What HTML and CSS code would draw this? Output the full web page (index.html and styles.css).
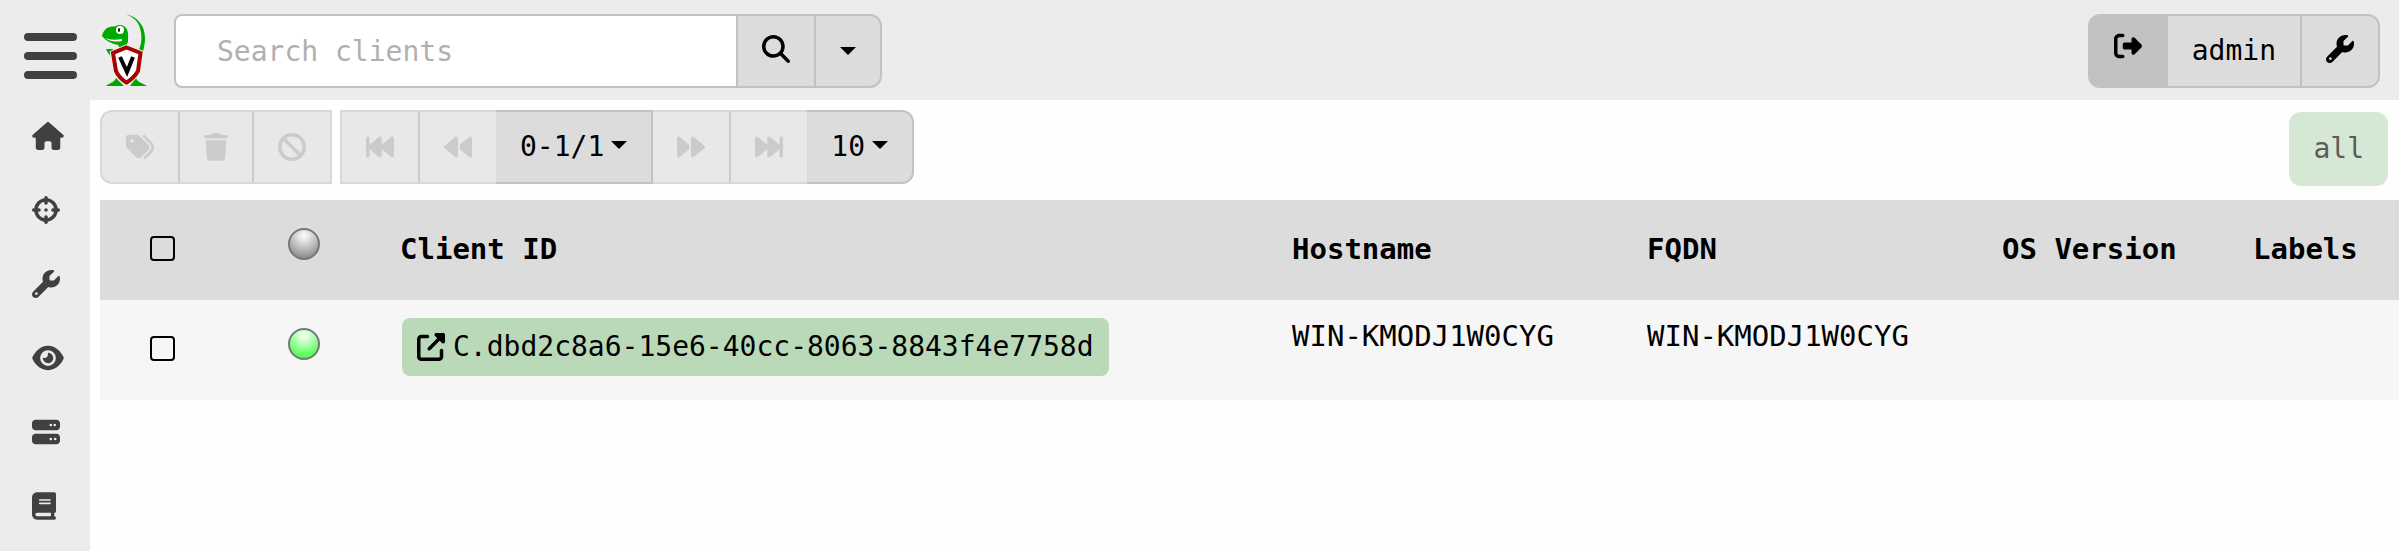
FILE: index.html
```html
<!DOCTYPE html>
<html lang="en">
<head>
<meta charset="utf-8">
<title>Clients</title>
<link rel="stylesheet" href="styles.css">
</head>
<body>
<svg class="sprite" aria-hidden="true">
<symbol id="house" viewBox="0 0 576 512"><path d="M575.8 255.5c0 18-15 32.1-32 32.1h-32l.7 160.2c0 2.7-.2 5.4-.5 8.1V472c0 22.1-17.9 40-40 40H456c-1.1 0-2.2 0-3.3-.1c-1.4 .1-2.8 .1-4.2 .1H416 392c-22.1 0-40-17.9-40-40V448 384c0-17.7-14.3-32-32-32H256c-17.7 0-32 14.3-32 32v64 24c0 22.1-17.9 40-40 40H160 128.1c-1.5 0-3-.1-4.5-.2c-1.2 .1-2.4 .2-3.6 .2H104c-22.1 0-40-17.9-40-40V360c0-.9 0-1.9 .1-2.8V287.6H32c-18 0-32-14-32-32.1c0-9 3-17 10-24L266.4 8c7-7 15-8 22-8s15 2 21 7L564.8 231.5c8 7 12 15 11 24z"/></symbol>
<symbol id="crosshairs" viewBox="0 0 512 512"><path d="M256 0c17.700 0 32 14.300 32 32V42.400c93.700 13.900 167.700 88 181.600 181.600H480c17.700 0 32 14.300 32 32s-14.300 32-32 32H469.600c-13.900 93.700-88 167.700-181.600 181.600V480c0 17.700-14.300 32-32 32s-32-14.300-32-32V469.600C130.300 455.700 56.300 381.700 42.400 288H32c-17.700 0-32-14.300-32-32s14.300-32 32-32H42.400C56.300 130.300 130.300 56.300 224 42.400V32c0-17.700 14.300-32 32-32zM107.400 288c12.500 58.300 58.400 104.100 116.600 116.600V384c0-17.700 14.300-32 32-32s32 14.300 32 32v20.600c58.300-12.500 104.100-58.400 116.600-116.600H384c-17.700 0-32-14.300-32-32s14.300-32 32-32h20.600C392.100 165.700 346.300 119.900 288 107.400V128c0 17.700-14.300 32-32 32s-32-14.300-32-32V107.400C165.700 119.900 119.900 165.700 107.400 224H128c17.700 0 32 14.300 32 32s-14.300 32-32 32H107.400zM256 224a32 32 0 1 1 0 64 32 32 0 1 1 0-64z"/></symbol>
<symbol id="wrench" viewBox="0 0 512 512"><path d="M352 320c88.400 0 160-71.600 160-160c0-15.300-2.200-30.100-6.200-44.200c-3.100-10.800-16.400-13.200-24.300-5.300l-76.800 76.800c-3 3-7.100 4.700-11.300 4.700H336c-8.800 0-16-7.200-16-16V118.600c0-4.200 1.700-8.300 4.700-11.300l76.800-76.800c7.900-7.900 5.400-21.200-5.300-24.300C382.100 2.200 367.300 0 352 0C263.600 0 192 71.600 192 160c0 19.100 3.400 37.500 9.500 54.500L19.900 396.100C7.200 408.800 0 426.100 0 444.100C0 481.600 30.400 512 67.900 512c18 0 35.300-7.200 48-19.900L297.500 310.500c17 6.200 35.400 9.500 54.500 9.500zM80 408a24 24 0 1 1 0 48 24 24 0 1 1 0-48z"/></symbol>
<symbol id="eye" viewBox="0 0 576 512"><path d="M288 32c-80.800 0-145.500 36.800-192.600 80.600C48.600 156 17.300 208 2.500 243.700c-3.300 7.900-3.300 16.700 0 24.600C17.300 304 48.600 356 95.400 399.400C142.500 443.200 207.200 480 288 480s145.500-36.800 192.600-80.600c46.800-43.500 78.100-95.400 93-131.100c3.300-7.900 3.300-16.700 0-24.600c-14.900-35.700-46.200-87.700-93-131.100C433.500 68.800 368.800 32 288 32zM144 256a144 144 0 1 1 288 0 144 144 0 1 1 -288 0zm144-64c0 35.300-28.700 64-64 64c-7.100 0-13.900-1.200-20.300-3.300c-5.500-1.800-11.900 1.600-11.700 7.400c.3 6.900 1.300 13.800 3.200 20.700c13.700 51.200 66.400 81.600 117.600 67.900s81.600-66.400 67.900-117.600c-11.100-41.500-47.800-69.400-88.600-71.100c-5.800-.2-9.200 6.100-7.400 11.700c2.100 6.400 3.300 13.200 3.300 20.300z"/></symbol>
<symbol id="server" viewBox="0 0 512 512"><path d="M64 32C28.700 32 0 60.700 0 96v64c0 35.300 28.700 64 64 64H448c35.300 0 64-28.700 64-64V96c0-35.300-28.700-64-64-64H64zm280 72a24 24 0 1 1 0 48 24 24 0 1 1 0-48zm48 24a24 24 0 1 1 48 0 24 24 0 1 1 -48 0zM64 288c-35.300 0-64 28.700-64 64v64c0 35.300 28.700 64 64 64H448c35.300 0 64-28.700 64-64V352c0-35.300-28.700-64-64-64H64zm280 72a24 24 0 1 1 0 48 24 24 0 1 1 0-48zm56 24a24 24 0 1 1 48 0 24 24 0 1 1 -48 0z"/></symbol>
<symbol id="book" viewBox="0 0 448 512"><path d="M96 0C43 0 0 43 0 96V416c0 53 43 96 96 96H384h32c17.700 0 32-14.300 32-32s-14.300-32-32-32V384c17.700 0 32-14.300 32-32V32c0-17.700-14.300-32-32-32H384 96zm0 384H352v64H96c-17.700 0-32-14.300-32-32s14.300-32 32-32zm32-240c0-8.800 7.200-16 16-16H336c8.800 0 16 7.200 16 16s-7.200 16-16 16H144c-8.800 0-16-7.200-16-16zm16 48H336c8.800 0 16 7.200 16 16s-7.200 16-16 16H144c-8.800 0-16-7.200-16-16s7.200-16 16-16z"/></symbol>
<symbol id="tags" viewBox="0 0 512 512"><path d="M345 39.100L472.800 168.400c52.400 53 52.400 138.200 0 191.200L360.800 472.900c-9.300 9.400-24.500 9.500-33.900 .2s-9.500-24.500-.2-33.900L438.600 325.900c33.900-34.300 33.900-89.400 0-123.700L310.900 72.900c-9.300-9.400-9.200-24.600 .2-33.900s24.600-9.200 33.900 .2zM0 229.500V80C0 53.500 21.500 32 48 32H197.500c17 0 33.300 6.700 45.300 18.700l168 168c25 25 25 65.500 0 90.500L277.300 442.700c-25 25-65.500 25-90.500 0l-168-168C6.700 262.700 0 246.500 0 229.500zM144 144a32 32 0 1 0 -64 0 32 32 0 1 0 64 0z"/></symbol>
<symbol id="trash" viewBox="0 0 448 512"><path d="M135.200 17.700L128 32H32C14.300 32 0 46.300 0 64S14.300 96 32 96H416c17.700 0 32-14.300 32-32s-14.300-32-32-32H320l-7.200-14.300C307.400 6.800 296.300 0 284.200 0H163.800c-12.100 0-23.200 6.800-28.600 17.700zM416 128H32L53.200 467c1.600 25.300 22.600 45 47.900 45H346.900c25.300 0 46.300-19.700 47.900-45L416 128z"/></symbol>
<symbol id="ban" viewBox="0 0 512 512"><path d="M367.200 412.500L99.500 144.800C77.100 176.100 64 214.500 64 256c0 106 86 192 192 192c41.500 0 79.900-13.100 111.200-35.500zm45.300-45.300C434.900 335.900 448 297.500 448 256c0-106-86-192-192-192c-41.500 0-79.900 13.100-111.200 35.500L412.500 367.200zM0 256a256 256 0 1 1 512 0A256 256 0 1 1 0 256z"/></symbol>
<symbol id="first" viewBox="0 0 512 512"><path d="M493.600 445c-11.200 5.300-24.500 3.600-34.100-4.400L288 297.700V416c0 12.400-7.200 23.700-18.400 29s-24.500 3.600-34.100-4.400L64 297.700V416c0 17.700-14.300 32-32 32s-32-14.300-32-32V96C0 78.300 14.300 64 32 64s32 14.300 32 32V214.300L235.500 71.400c9.500-7.900 22.800-9.700 34.100-4.400S288 83.600 288 96V214.300L459.500 71.400c9.500-7.900 22.800-9.700 34.100-4.400S512 83.600 512 96V416c0 12.400-7.200 23.700-18.400 29z"/></symbol>
<symbol id="previous" viewBox="0 0 512 512"><path d="M459.500 440.600c9.500 7.900 22.800 9.700 34.100 4.400s18.400-16.600 18.400-29V96c0-12.400-7.200-23.700-18.400-29s-24.500-3.600-34.100 4.400L288 214.300V256v41.700L459.500 440.600zM256 352V256 128 96c0-12.400-7.200-23.700-18.400-29s-24.500-3.600-34.100 4.400l-192 160C4.200 237.500 0 246.500 0 256s4.200 18.500 11.500 24.600l192 160c9.500 7.900 22.800 9.700 34.100 4.400s18.400-16.600 18.400-29V352z"/></symbol>
<symbol id="search" viewBox="0 0 512 512"><path d="M416 208c0 45.900-14.900 88.300-40 122.700L502.600 457.400c12.500 12.500 12.500 32.800 0 45.300s-32.800 12.500-45.300 0L330.700 376c-34.400 25.200-76.800 40-122.700 40C93.100 416 0 322.900 0 208S93.100 0 208 0S416 93.100 416 208zM208 352a144 144 0 1 0 0-288 144 144 0 1 0 0 288z"/></symbol>
<symbol id="logout" viewBox="0 0 512 512"><path d="M377.900 105.900L500.700 228.700c7.200 7.200 11.300 17.100 11.300 27.300s-4.100 20.100-11.300 27.300L377.900 406.100c-6.400 6.400-15 9.900-24 9.900c-18.700 0-33.900-15.200-33.900-33.900l0-62.100-128 0c-17.700 0-32-14.300-32-32l0-64c0-17.700 14.300-32 32-32l128 0 0-62.100c0-18.700 15.200-33.900 33.900-33.900c9 0 17.600 3.600 24 9.900zM160 96L96 96c-17.700 0-32 14.300-32 32l0 256c0 17.700 14.300 32 32 32l64 0c17.700 0 32 14.300 32 32s-14.300 32-32 32l-64 0c-53 0-96-43-96-96L0 128C0 75 43 32 96 32l64 0c17.700 0 32 14.300 32 32s-14.300 32-32 32z"/></symbol>
<symbol id="external" viewBox="0 0 512 512"><path d="M352 0c-12.900 0-24.600 7.800-29.600 19.800s-2.200 25.700 6.900 34.900L370.700 96 201.400 265.400c-12.500 12.500-12.500 32.800 0 45.300s32.800 12.500 45.300 0L416 141.300l41.400 41.400c9.200 9.200 22.900 11.900 34.900 6.900s19.800-16.600 19.800-29.600V32c0-17.700-14.300-32-32-32H352zM80 32C35.800 32 0 67.800 0 112V432c0 44.200 35.800 80 80 80H400c44.200 0 80-35.800 80-80V320c0-17.700-14.300-32-32-32s-32 14.300-32 32V432c0 8.800-7.200 16-16 16H80c-8.800 0-16-7.200-16-16V112c0-8.800 7.200-16 16-16H192c17.700 0 32-14.300 32-32s-14.300-32-32-32H80z"/></symbol>
<symbol id="bars" viewBox="0 0 53 46"><rect width="53" height="8" rx="4"/><rect y="19" width="53" height="8" rx="4"/><rect y="38" width="53" height="8" rx="4"/></symbol>
</svg>

<header class="topbar">
  <button class="menu" type="button" aria-label="Menu"><svg class="bars"><use href="#bars"/></svg></button>
  <a class="brand" href="#" aria-label="Home">
    <svg class="logo" viewBox="0 0 46 72">
      <g fill="#00a900">
        <path d="M24 0C36 3 43 12 43 24C43 30 42 33 41 38L37 36C40 29 40 21 38 14C36 7 31 3 24 0Z"/>
        <path d="M0 22C1 18 3 14 8 13C11 12 12 13 14 12C17 10 22 11 24 14C27 18 26 23 26 28C25 31 21 32 17 31C10 30 4 27 0 22Z"/>
        <path d="M16 30L25 28L25 34L18 36ZM4 35L11 35L11 37L8 37L9 42L6 39Z"/>
        <path d="M4 72C7 69 12 69 14 64L22 72ZM28 72L34 64C36 69 41 69 45 72Z"/>
      </g>
      <path d="M3 24Q10 27 20 25L20 27Q10 29 3 24Z" fill="#fff"/>
      <circle cx="18" cy="16" r="4" fill="#fff"/><ellipse cx="17" cy="16" rx="1" ry="2"/>
      <path d="M24.500 33.500L38.500 39L36 57Q32 64 24.500 68.500Q17 64 14 57L11 39Z" fill="#fff" stroke="#ececec" stroke-width="6"/>
      <path d="M24.500 33.500L38.500 39L36 57Q32 64 24.500 68.500Q17 64 14 57L11 39Z" fill="#fff" stroke="#a90000" stroke-width="4"/>
      <path d="M18 43L25 58L31 43" fill="none" stroke="#000" stroke-width="4"/>
    </svg>
  </a>
  <form class="search group">
    <input type="text" aria-label="Search clients" placeholder="Search clients">
    <button class="btn" type="button" aria-label="Search"><svg class="icon"><use href="#search"/></svg></button>
    <button class="btn small" type="button" aria-label="Search options"><span class="caret"></span></button>
  </form>
  <div class="account group">
    <a class="btn logout" href="#" aria-label="Log out"><svg class="icon"><use href="#logout"/></svg></a>
    <button class="btn user" type="button">admin</button>
    <button class="btn" type="button" aria-label="Settings"><svg class="icon"><use href="#wrench"/></svg></button>
  </div>
</header>

<div class="body">
  <nav class="sidebar" aria-label="Main">
    <a href="#" aria-label="Home"><svg class="icon wide"><use href="#house"/></svg></a>
    <a href="#" aria-label="Hunts"><svg class="icon"><use href="#crosshairs"/></svg></a>
    <a href="#" aria-label="Artifacts"><svg class="icon"><use href="#wrench"/></svg></a>
    <a href="#" aria-label="Events"><svg class="icon wide"><use href="#eye"/></svg></a>
    <a href="#" aria-label="Server"><svg class="icon"><use href="#server"/></svg></a>
    <a href="#" aria-label="Notebooks"><svg class="icon narrow"><use href="#book"/></svg></a>
  </nav>
  <main class="content">
    <div class="toolbar">
      <div class="group">
        <button class="btn" type="button" disabled aria-label="Label clients"><svg class="icon"><use href="#tags"/></svg></button>
        <button class="btn" type="button" disabled aria-label="Delete clients"><svg class="icon narrow"><use href="#trash"/></svg></button>
        <button class="btn" type="button" disabled aria-label="Cancel"><svg class="icon"><use href="#ban"/></svg></button>
      </div>
      <div class="group pager">
        <button class="btn" type="button" disabled aria-label="First page"><svg class="icon"><use href="#first"/></svg></button>
        <button class="btn" type="button" disabled aria-label="Previous page"><svg class="icon"><use href="#previous"/></svg></button>
        <button class="btn count" type="button">0-1/1<span class="caret"></span></button>
        <button class="btn" type="button" disabled aria-label="Next page"><svg class="icon flip"><use href="#previous"/></svg></button>
        <button class="btn" type="button" disabled aria-label="Last page"><svg class="icon flip"><use href="#first"/></svg></button>
        <button class="btn count" type="button">10<span class="caret"></span></button>
      </div>
      <button class="filter" type="button" disabled>all</button>
    </div>
    <table class="clients">
      <colgroup><col class="col-check"><col class="col-state"><col><col class="col-host"><col class="col-host"><col class="col-os"><col class="col-labels"></colgroup>
      <thead>
        <tr>
          <th class="check"><input type="checkbox" aria-label="Select all"></th>
          <th class="state"><span class="orb"></span></th>
          <th>Client ID</th><th>Hostname</th><th>FQDN</th><th>OS Version</th><th>Labels</th>
        </tr>
      </thead>
      <tbody>
        <tr>
          <td class="check"><input type="checkbox" aria-label="Select client"></td>
          <td class="state"><span class="orb online"></span></td>
          <td><a class="client" href="#"><svg class="icon"><use href="#external"/></svg>C.dbd2c8a6-15e6-40cc-8063-8843f4e7758d</a></td>
          <td>WIN-KMODJ1W0CYG</td><td>WIN-KMODJ1W0CYG</td><td></td><td></td>
        </tr>
      </tbody>
    </table>
  </main>
</div>
</body>
</html>
```
FILE: styles.css
```css
* { box-sizing: border-box; }
body {
  margin: 0;
  min-height: 100vh;
  display: flex;
  flex-direction: column;
  background: #fefefe;
  color: #000;
  font: 28px/42px "DejaVu Sans Mono", monospace;
}
button, input { font: inherit; color: inherit; }
a { color: inherit; text-decoration: none; }
.sprite { display: none; }
.icon { width: 28px; height: 28px; fill: currentColor; flex: none; }
.wide { width: 32px; }
.narrow { width: 24px; }
.flip { transform: scaleX(-1); }

.topbar {
  display: flex;
  align-items: flex-start;
  height: 100px;
  padding: 14px 19px 0 24px;
  background: #ececec;
}
.menu { padding: 19px 0 0; border: 0; background: none; color: #404040; display: flex; }
.bars { width: 53px; height: 46px; fill: currentColor; }
.brand { margin: 0 26px 0 25px; display: flex; }
.logo { width: 46px; height: 72px; }

.group { display: flex; }
.btn {
  display: flex;
  align-items: center;
  justify-content: center;
  height: 74px;
  min-width: 80px;
  padding: 0 24px;
  border: 2px solid #c2c2c2;
  background: #dcdcdc;
}
.btn + .btn, input + .btn { margin-left: -2px; }
.group .btn:last-child { border-radius: 0 12px 12px 0; }
.group .btn:first-child { border-radius: 12px 0 0 12px; }
.btn:disabled { background: #e8e8e8; border-color: #d8d8d8; border-left-color: #cbcbcb; color: #cbcbcb; }
.btn:disabled:first-child { border-left-color: #d8d8d8; }
.caret { border: 8px solid transparent; border-top-color: #000; border-bottom: 0; }
.btn.small { min-width: 68px; padding: 0; }

.search input {
  width: 564px;
  height: 74px;
  padding: 0 41px;
  border: 2px solid #c2c2c2;
  border-radius: 8px 0 0 8px;
  background: #fff;
}
.search input::placeholder { color: #b0b0b0; opacity: 1; }
.search .icon, .account .icon { margin-bottom: 4px; }
.account { margin-left: auto; }
.logout { background: #c2c2c2; }
.logout .icon { margin-bottom: 10px; }

.body { display: flex; flex: 1; }
.sidebar { width: 90px; flex: none; background: #ececec; color: #404040; }
.sidebar a { display: flex; align-items: center; height: 74px; padding: 0 0 2px 32px; }

.content { flex: 1; min-width: 0; padding: 10px 0 0 10px; }
.toolbar { display: flex; gap: 8px; height: 90px; padding-right: 11px; }
.toolbar .group .btn:nth-child(2) { min-width: 76px; }
.toolbar .group:first-child .btn:last-child { border-radius: 0; }
.toolbar .pager .btn { border-right-width: 0; }
.toolbar .pager .count { border-left: 0; margin-left: 0; border-right-width: 2px; }
.toolbar .pager .count + .btn { border-left: 0; margin-left: 0; min-width: 76px; }
.toolbar .pager .btn:not(.count) + .btn:not(.count) { margin-left: 0; min-width: 78px; }
.pager .btn:not(.count) { min-width: 78px; }
.pager .btn:first-child { border-radius: 0; }
.pager .caret { margin: 0 0 4px 7px; }
.filter {
  margin: 2px 0 0 auto;
  height: 74px;
  padding: 0 24px;
  border: 0;
  border-radius: 12px;
  background: #d5e8d4;
  color: #5c5c5c;
}

.clients { width: 100%; table-layout: fixed; border-collapse: collapse; font-size: 29px; }
.clients tr { height: 100px; }
.clients th { padding: 0 15px 2px; text-align: left; white-space: nowrap; background: #dcdcdc; vertical-align: middle; }
.clients td { padding: 15px 15px 0; vertical-align: top; background: #f6f6f6; white-space: nowrap; }
.col-check { width: 138px; }
.col-state { width: 147px; }
.col-host { width: 355px; }
.col-os { width: 251px; }
.col-labels { width: 161px; }
.clients .check { padding: 0 0 4px 50px; vertical-align: middle; }
.check input {
  display: block;
  appearance: none;
  width: 25px;
  height: 25px;
  margin: 0;
  border: 2px solid #000;
  border-radius: 4px;
}
.clients .state { padding: 28px 0 0 50px; vertical-align: top; }
.orb {
  display: block;
  width: 32px;
  height: 32px;
  border: 2px solid #777;
  border-radius: 50%;
  background: radial-gradient(circle at 50% 20%, #fff, #777);
}
.orb.online { background: radial-gradient(circle at 50% 20%, #fff, #2f2); }
.client {
  display: inline-flex;
  align-items: center;
  gap: 8px;
  height: 58px;
  margin: 3px 0 0 2px;
  padding: 0 15px;
  border-radius: 8px;
  background: #bad9b8;
  font-size: 28px;
}
```
